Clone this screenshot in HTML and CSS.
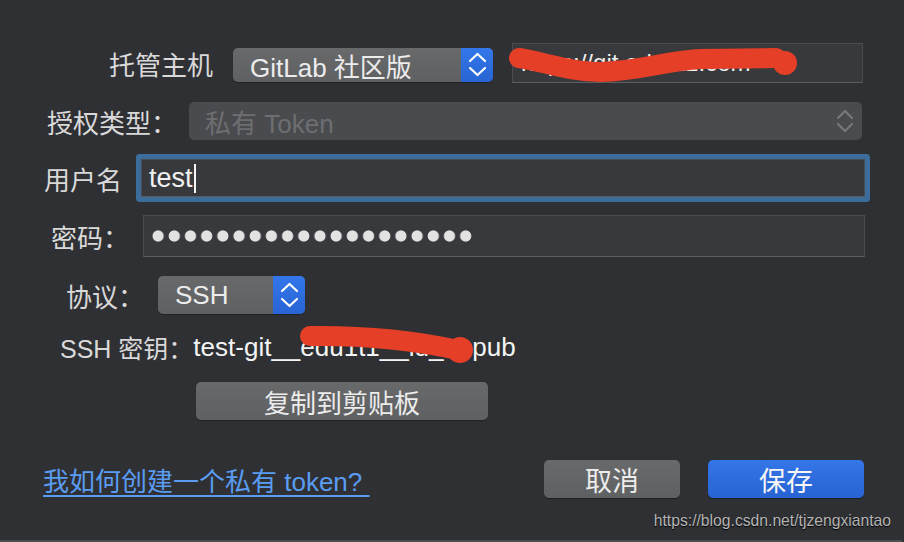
FILE: index.html
```html
<!DOCTYPE html>
<html lang="zh-CN">
<head>
    <meta charset="UTF-8">
    <meta name="viewport" content="width=device-width, initial-scale=1.0">
    <title>仓库设置</title>
    <link rel="stylesheet" href="styles.css">
</head>
<body>
    <div class="window">
        <div class="row row-host">
            <span class="label label-host">托管主机</span>
            <div class="popup popup-host">
                <span class="popup-text">GitLab 社区版</span>
                <span class="stepper">
                    <svg width="32" height="34" viewBox="0 0 32 34"><path d="M9 13 L16.5 6 L24 13 M9 20 L16.5 27 L24 20" fill="none" stroke="#fff" stroke-width="2.2" stroke-linecap="round" stroke-linejoin="round"/></svg>
                </span>
            </div>
            <div class="field field-url">https://git.edu1t1.com</div>
        </div>

        <div class="row row-auth">
            <span class="label label-auth">授权类型：</span>
            <div class="popup popup-disabled">
                <span class="popup-text">私有 Token</span>
                <svg class="chevrons" width="18" height="26" viewBox="0 0 18 26"><path d="M2 10 L9 3 L16 10 M2 16 L9 23 L16 16" fill="none" stroke="#77787b" stroke-width="2.2" stroke-linecap="round" stroke-linejoin="round"/></svg>
            </div>
        </div>

        <div class="row row-user">
            <span class="label label-user">用户名</span>
            <div class="field field-focus"><span class="value">test</span><span class="caret"></span></div>
        </div>

        <div class="row row-pass">
            <span class="label label-pass">密码：</span>
            <div class="field field-pass"><span class="dots"></span></div>
        </div>

        <div class="row row-proto">
            <span class="label label-proto">协议：</span>
            <div class="popup popup-proto">
                <span class="popup-text">SSH</span>
                <span class="stepper">
                    <svg width="32" height="38" viewBox="0 0 32 38"><path d="M9 15 L16.5 8 L24 15 M9 23 L16.5 30 L24 23" fill="none" stroke="#fff" stroke-width="2.2" stroke-linecap="round" stroke-linejoin="round"/></svg>
                </span>
            </div>
        </div>

        <div class="row row-key">
            <span class="key-label">SSH 密钥：</span><span class="key-value">test-git__edu1t1__id_rs.pub</span>
        </div>

        <div class="row row-copy">
            <button class="button button-copy">复制到剪贴板</button>
        </div>

        <div class="row footer">
            <a class="help" href="#">我如何创建一个私有 token?&nbsp;</a>
            <div class="actions">
                <button class="button button-cancel">取消</button>
                <button class="button button-save">保存</button>
            </div>
        </div>

        <div class="watermark">https://blog.csdn.net/tjzengxiantao</div>

        <!-- red marks drawn over the private bits -->
        <svg class="scribbles" width="904" height="542" viewBox="0 0 904 542">
            <path d="M519 58 C 545 62, 570 72, 600 72 C 640 71, 665 61, 700 59 L 776 58" fill="none" stroke="#e63f27" stroke-width="20" stroke-linecap="round"/>
            <circle cx="785" cy="63" r="12" fill="#e63f27"/>
            <path d="M310 336 Q 390 335 458 350" fill="none" stroke="#e63f27" stroke-width="20" stroke-linecap="round"/>
            <circle cx="460" cy="350" r="13" fill="#e63f27"/>
        </svg>
    </div>
</body>
</html>
```

FILE: styles.css
```css
body {
    margin: 0;
    background: #2f3034;
    font-family: "Liberation Sans", "Noto Sans CJK SC", sans-serif;
}
.window {
    position: relative;
    width: 902px;
    height: 540px;
    border-left: 2px solid #55565a;
    border-bottom: 2px solid #4c4d50;
    margin-left: -2px;
    background: #2f3034;
    overflow: hidden;
}
.row {
    display: flex;
    align-items: center;
}
.label {
    font-size: 26px;
    color: #d9d9d9;
    flex: none;
}

/* row positions */
.row-host {
    margin-top: 43px;
    height: 40px;
    padding-left: 109px;
}
.label-host { width: 124px; }
.row-auth {
    margin-top: 19px;
    height: 38px;
    padding-left: 47px;
}
.label-auth { width: 142px; }
.row-user {
    margin-top: 13px;
    height: 50px;
    padding-left: 44px;
}
.label-user { width: 97px; }
.row-pass {
    margin-top: 12px;
    height: 42px;
    padding-left: 51px;
}
.label-pass { width: 92px; }
.row-proto {
    margin-top: 19px;
    height: 38px;
    padding-left: 66px;
}
.label-proto { width: 92px; }
.row-key {
    margin-top: 18px;
    height: 30px;
    padding-left: 60px;
    font-size: 26px;
}
.row-copy {
    margin-top: 20px;
    height: 38px;
    padding-left: 196px;
}
.footer {
    margin-top: 40px;
    height: 38px;
    padding-left: 43px;
    padding-right: 38px;
}

/* popups */
.popup {
    display: flex;
    align-items: center;
    height: 34px;
    border-radius: 5px;
    background: linear-gradient(#68696b, #5f6062);
    box-shadow: 0 1px 1px rgba(0, 0, 0, 0.3);
    overflow: hidden;
    flex: none;
}
.popup-text {
    flex: 1;
    padding-left: 17px;
    font-size: 26px;
    color: #ececec;
}
.stepper {
    display: flex;
    width: 32px;
    height: 100%;
    background: linear-gradient(#3377ea, #2864d4);
}
.popup-host {
    width: 260px;
    margin-top: 4px;
}
.popup-proto {
    width: 147px;
    height: 38px;
}
.popup-disabled {
    width: 673px;
    height: 38px;
    background: #4a4b4f;
    box-shadow: none;
}
.popup-disabled .popup-text {
    padding-left: 16px;
    color: #6d6e71;
}
.chevrons {
    margin-right: 8px;
}

/* text fields */
.field {
    display: flex;
    align-items: center;
    box-sizing: border-box;
    background: #38393d;
    border: 1px solid #4b4c50;
    border-bottom-color: #5c5d60;
    color: #f0f0f0;
    flex: none;
}
.field-url {
    width: 351px;
    height: 40px;
    margin-left: 19px;
    padding-left: 8px;
    font-size: 24px;
}
.field-focus {
    width: 724px;
    height: 38px;
    padding-left: 7px;
    font-size: 27px;
    border-radius: 1px;
    box-shadow: 0 0 0 5px #3c6c9a;
}
.caret {
    width: 2px;
    height: 29px;
    margin-left: 1px;
    background: #f5f5f5;
}
.field-pass {
    width: 722px;
    height: 42px;
    padding-left: 6px;
}
.dots {
    width: 324px;
    height: 14px;
    background: radial-gradient(circle, #e2e2e2 5.2px, transparent 6px) 0 0 / 16.2px 14px repeat-x;
}

/* ssh key line */
.key-label {
    font-size: 25px;
    color: #d9d9d9;
}
.key-value {
    color: #f4f4f4;
}

/* buttons */
.button {
    height: 38px;
    border: none;
    border-radius: 5px;
    background: linear-gradient(#68696b, #5f6062);
    box-shadow: 0 1px 1px rgba(0, 0, 0, 0.35);
    color: #ececec;
    font-family: "Liberation Sans", "Noto Sans CJK SC", sans-serif;
    font-size: 27px;
    padding: 0;
}
.button-copy {
    width: 292px;
    font-size: 26px;
}
.actions {
    display: flex;
    gap: 28px;
    margin-left: auto;
}
.button-cancel {
    width: 136px;
}
.button-save {
    width: 156px;
    background: linear-gradient(#3476e8, #2763d2);
    color: #f6f6f6;
}
.help {
    font-size: 26px;
    color: #5a9cf2;
    text-decoration: underline;
    text-decoration-thickness: 2px;
    text-underline-offset: 4px;
}

.watermark {
    margin-top: 14px;
    padding-right: 11px;
    text-align: right;
    font-size: 15.7px;
    color: #b4b4b4;
    text-shadow: 0 1px 1px #000;
}
.scribbles {
    position: absolute;
    left: 0;
    top: 0;
}
```
